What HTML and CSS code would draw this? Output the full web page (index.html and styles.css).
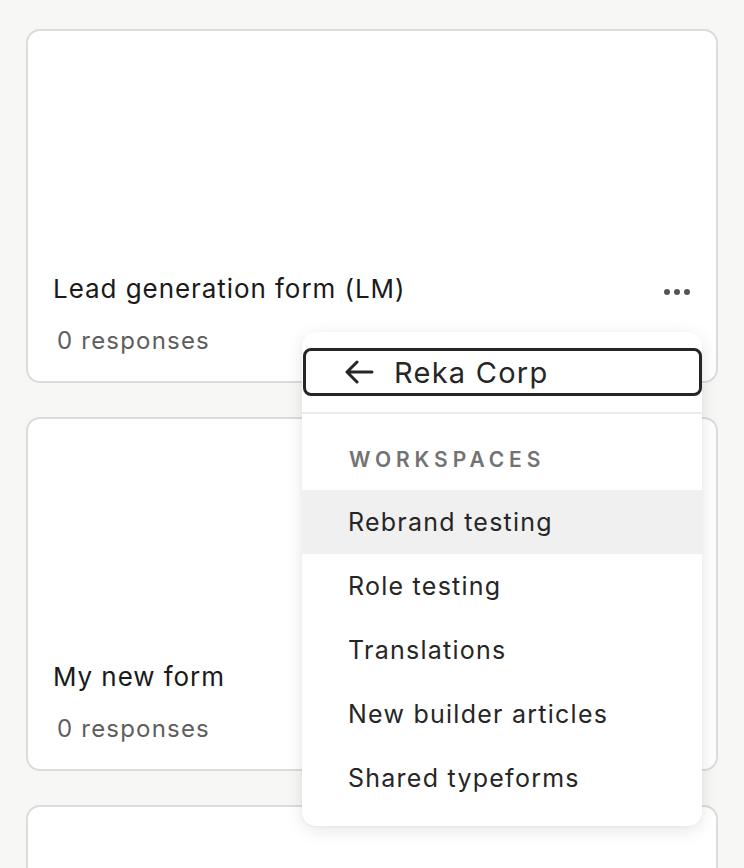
FILE: index.html
```html
<!DOCTYPE html>
<html>
<head>
<meta charset="utf-8">
<link rel="stylesheet" href="styles.css">
</head>
<body>
<div class="list">
  <div class="card">
    <div class="card-body">
      <div class="title-row">
        <div class="title">Lead generation form (LM)</div>
        <div class="dots"><span></span><span></span><span></span></div>
      </div>
      <div class="responses">0 responses</div>
    </div>
  </div>
  <div class="card">
    <div class="card-body">
      <div class="title-row">
        <div class="title">My new form</div>
      </div>
      <div class="responses">0 responses</div>
    </div>
  </div>
  <div class="card"></div>
</div>

<div class="menu">
  <button class="back">
    <svg class="arrow" width="30" height="24" viewBox="0 0 30 24"><path d="M28 12H3M13 2L3 12l10 10" fill="none" stroke="#262626" stroke-width="3" stroke-linecap="round" stroke-linejoin="round"/></svg>
    <span>Reka Corp</span>
  </button>
  <div class="divider"></div>
  <div class="section-label">WORKSPACES</div>
  <ul class="items">
    <li class="item active">Rebrand testing</li>
    <li class="item">Role testing</li>
    <li class="item">Translations</li>
    <li class="item">New builder articles</li>
    <li class="item">Shared typeforms</li>
  </ul>
</div>
</body>
</html>
```
FILE: styles.css
```css
html, body {
  margin: 0;
  padding: 0;
  background: #f7f7f5;
  font-family: Inter, "Noto Sans", sans-serif;
  overflow: hidden;
  height: 868px;
}
.list {
  padding: 29px 26px 0 26px;
  display: flex;
  flex-direction: column;
  gap: 34px;
}
.card {
  box-sizing: border-box;
  height: 354px;
  background: #fff;
  border: 2px solid #dcdcdb;
  border-radius: 14px;
  display: flex;
  flex-direction: column;
  justify-content: flex-end;
}
.card-body {
  padding: 0 26px 26px 25px;
}
.title-row {
  display: flex;
  align-items: center;
  justify-content: space-between;
}
.title {
  font-size: 26px;
  line-height: 32px;
  color: #1a1a1a;
  letter-spacing: 0.94px;
}
.dots {
  display: flex;
  gap: 4px;
  margin-top: 6px;
}
.dots span {
  width: 6px;
  height: 6px;
  border-radius: 50%;
  background: #555;
}
.responses {
  margin-top: 22px;
  padding-left: 4px;
  font-size: 24px;
  line-height: 28px;
  color: #5e5e5e;
  letter-spacing: 1.2px;
}
.menu {
  position: absolute;
  left: 302px;
  top: 332px;
  width: 400px;
  box-sizing: border-box;
  background: #fff;
  border-radius: 14px;
  box-shadow: 0 4px 18px rgba(0, 0, 0, 0.1), 0 1px 3px rgba(0,0,0,0.04);
  padding: 16px 0 16px 0;
}
.back {
  box-sizing: border-box;
  display: flex;
  align-items: center;
  width: 399px;
  margin-left: 1px;
  height: 48px;
  border: 3px solid #262626;
  border-radius: 8px;
  background: #fff;
  padding: 0 0 0 38px;
  font-family: inherit;
  font-size: 29px;
  letter-spacing: 1.25px;
  color: #262626;
  cursor: pointer;
}
.arrow {
  margin-right: 20px;
}
.divider {
  height: 2px;
  background: #ebebeb;
  margin-top: 16px;
}
.section-label {
  height: 76px;
  box-sizing: border-box;
  padding: 34px 0 0 47px;
  font-size: 21px;
  line-height: 24px;
  font-weight: 600;
  letter-spacing: 4.9px;
  color: #737373;
}
.items {
  list-style: none;
  margin: 0;
  padding: 0;
}
.item {
  height: 64px;
  line-height: 64px;
  padding-left: 46px;
  font-size: 25px;
  color: #262626;
  letter-spacing: 1.25px;
}
.item.active {
  background: #f0f0f0;
}
```
